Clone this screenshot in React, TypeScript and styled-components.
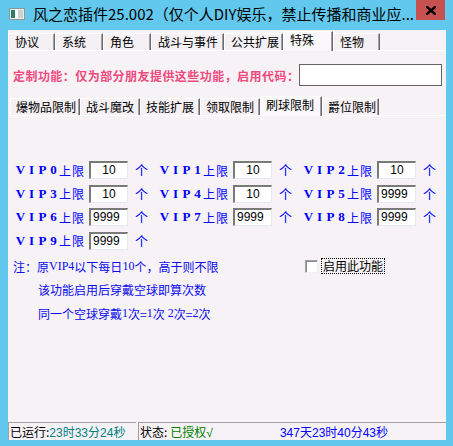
import React from "react";
import styled, { createGlobalStyle } from "styled-components";

const Global = createGlobalStyle`
  html, body { margin: 0; padding: 0; background: #62c8ee; }
  body { font-family: "Noto Sans CJK SC", "Liberation Sans", sans-serif; }
  * { box-sizing: border-box; }
`;

const Window = styled.div`
  width: 453px;
  height: 446px;
  background: #62c8ee;
  display: flex;
  flex-direction: column;
`;

const TitleBar = styled.div`
  height: 30px;
  display: flex;
  align-items: flex-start;
`;

const TitleIcon = styled.svg`
  margin: 8px 0 0 9px;
  flex: none;
`;

const TitleText = styled.div`
  margin: 4px 0 0 8px;
  font-family: "Noto Sans CJK SC", sans-serif;
  font-size: 15px;
  line-height: 20px;
  color: #000;
  white-space: nowrap;
  flex: 1;
  overflow: hidden;
`;

const CloseButton = styled.div`
  width: 29px;
  height: 20px;
  margin-right: 8px;
  background: #c75050;
  display: flex;
  align-items: center;
  justify-content: center;
  flex: none;
`;

const Client = styled.div`
  margin: 0 7px 6px 8px;
  flex: 1;
  background: #f6f2f6;
  display: flex;
  flex-direction: column;
`;

const TabRow = styled.div<{ $left?: number }>`
  height: 20px;
  display: flex;
  align-items: flex-end;
  padding-left: ${(p) => p.$left ?? 0}px;
`;

const Tab = styled.div<{ $w: number; $active?: boolean; $pad?: number }>`
  width: ${(p) => p.$w}px;
  height: ${(p) => (p.$active ? 20 : 17)}px;
  margin-bottom: ${(p) => (p.$active ? -1 : 0)}px;
  position: relative;
  z-index: ${(p) => (p.$active ? 2 : 1)};
  background: ${(p) => (p.$active ? "#faf8fa" : "#f4f0f4")};
  border-top: 1px solid #ffffff;
  border-left: 1px solid #ffffff;
  border-right: 1px solid #696969;
  box-shadow: inset -1px 0 0 #a0a0a0;
  padding-left: ${(p) => p.$pad ?? 6}px;
  font-size: 12px;
  line-height: ${(p) => (p.$active ? 16 : 15)}px;
  color: #000;
  white-space: nowrap;
`;

const Panel = styled.div`
  flex: 1;
  border-top: 1px solid #ffffff;
  display: flex;
  flex-direction: column;
`;

const CodeRow = styled.div`
  margin-top: 13px;
  height: 22px;
  display: flex;
  align-items: center;
  padding: 0 4px 0 5px;
`;

const CodeLabel = styled.div`
  font-size: 12px;
  font-weight: bold;
  letter-spacing: 0.45px;
  color: #f04a7c;
  white-space: nowrap;
`;

const CodeInput = styled.div`
  margin-left: auto;
  width: 144px;
  height: 22px;
  background: #fff;
  border: 1px solid #646464;
`;

const SubTabs = styled.div`
  margin-top: 9px;
`;

const InnerPanel = styled.div`
  flex: 1;
  border-top: 1px solid #ffffff;
  padding: 45px 0 0 7px;
`;

const VipGrid = styled.div`
  display: grid;
  grid-template-columns: repeat(3, 144px);
  grid-auto-rows: 23.6px;
`;

const VipCell = styled.div`
  display: flex;
  align-items: flex-start;
  height: 23.6px;
`;

const VipLabel = styled.div`
  width: 74px;
  display: flex;
  align-items: center;
  height: 18px;
  color: #0000ff;
  font-size: 12px;
`;

const Glyph = styled.span`
  width: 11px;
  text-align: center;
  font-family: "Liberation Serif", serif;
  font-weight: bold;
  font-size: 13px;
`;

const LimitText = styled.span`
  font-size: 12px;
  letter-spacing: 1px;
`;

const NumBox = styled.div<{ $center?: boolean }>`
  width: 39px;
  height: 18px;
  background: #fff;
  border-style: solid;
  border-width: 2px 1px 1px 2px;
  border-color: #7a7a7a #e8e8e8 #e8e8e8 #7a7a7a;
  font-family: "Liberation Sans", sans-serif;
  font-size: 12px;
  line-height: 14px;
  color: #000;
  text-align: ${(p) => (p.$center ? "center" : "left")};
  padding-left: ${(p) => (p.$center ? 0 : 2)}px;
`;

const Unit = styled.span`
  margin-left: 7px;
  color: #0000ff;
  font-size: 13px;
  line-height: 18px;
`;

const Notes = styled.div`
  margin-top: -1px;
  margin-left: -2px;
  display: flex;
  flex-direction: column;
`;

const NoteLine = styled.div<{ $indent?: number }>`
  height: 23.5px;
  display: flex;
  align-items: center;
  padding-left: ${(p) => p.$indent ?? 0}px;
  font-size: 12px;
  color: #0a0aee;
  white-space: nowrap;
`;

const Serif = styled.span`
  font-family: "Liberation Serif", serif;
  font-size: 12px;
`;

const CheckWrap = styled.div`
  margin-left: auto;
  margin-right: 62px;
  display: flex;
  align-items: center;
  color: #000;
`;

const CheckBox = styled.div`
  width: 13px;
  height: 13px;
  background: #fff;
  border-style: solid;
  border-width: 1px;
  border-color: #a0a0a0 #f0f0f0 #f0f0f0 #a0a0a0;
  box-shadow: inset 1px 1px 0 #8a8a8a;
`;

const CheckLabel = styled.span`
  margin-left: 4px;
  padding: 0 1px;
  outline: 1px dotted #000;
  line-height: 14px;
  font-size: 12px;
  color: #000;
`;

const StatusBar = styled.div`
  height: 18px;
  display: flex;
  gap: 2px;
`;

const StatusPanel = styled.div<{ $w?: number }>`
  ${(p) => (p.$w ? `width: ${p.$w}px;` : "flex: 1;")}
  border-top: 1px solid #a0a0a0;
  border-left: 1px solid #a0a0a0;
  display: flex;
  align-items: center;
  padding-left: 1px;
  font-size: 12px;
  white-space: nowrap;
`;

const Colored = styled.span<{ $c: string; $ml?: number }>`
  color: ${(p) => p.$c};
  margin-left: ${(p) => p.$ml ?? 0}px;
  font-family: "Liberation Sans", "Noto Sans CJK SC", sans-serif;
`;

const topTabs: [string, number][] = [
  ["协议", 47],
  ["系统", 48],
  ["角色", 48],
  ["战斗与事件", 73],
  ["公共扩展", 59],
  ["特殊", 50],
  ["怪物", 47],
];

const subTabs: [string, number][] = [
  ["爆物品限制", 70],
  ["战斗魔改", 60],
  ["技能扩展", 60],
  ["领取限制", 60],
  ["刷球限制", 62],
  ["爵位限制", 57],
];

const vips = ["10", "10", "10", "10", "10", "9999", "9999", "9999", "9999", "9999"];

export default function App() {
  return (
    <Window>
      <Global />
      <TitleBar>
        <TitleIcon width="16" height="12" viewBox="0 0 16 12">
          <rect x="0.5" y="0.5" width="15" height="11" fill="#e8ecec" stroke="#8a9a9a" />
          <rect x="2" y="2" width="4" height="8" fill="#2f7a6a" />
          <rect x="6" y="2" width="3" height="8" fill="#ffffff" />
          <rect x="9" y="2" width="5" height="8" fill="#c8d0d0" />
        </TitleIcon>
        <TitleText>风之恋插件25.002（仅个人DIY娱乐，禁止传播和商业应...</TitleText>
        <CloseButton>
          <svg width="10" height="9" viewBox="0 0 10 9">
            <path d="M1 1 L9 8 M9 1 L1 8" stroke="#000" strokeWidth="2.4" strokeLinecap="square" />
          </svg>
        </CloseButton>
      </TitleBar>
      <Client>
        <TabRow>
          {topTabs.map(([t, w]) => (
            <Tab key={t} $w={w} $active={t === "特殊"}>
              {t}
            </Tab>
          ))}
        </TabRow>
        <Panel>
          <CodeRow>
            <CodeLabel>定制功能：仅为部分朋友提供这些功能，启用代码：</CodeLabel>
            <CodeInput />
          </CodeRow>
          <SubTabs>
            <TabRow $left={2}>
              {subTabs.map(([t, w]) => (
                <Tab key={t} $w={w} $pad={5} $active={t === "刷球限制"}>
                  {t}
                </Tab>
              ))}
            </TabRow>
          </SubTabs>
          <InnerPanel>
            <VipGrid>
              {vips.map((v, i) => (
                <VipCell key={i}>
                  <VipLabel>
                    <Glyph>V</Glyph>
                    <Glyph>I</Glyph>
                    <Glyph>P</Glyph>
                    <Glyph>{i}</Glyph>
                    <LimitText>上限</LimitText>
                  </VipLabel>
                  <NumBox $center={v.length < 4}>{v}</NumBox>
                  <Unit>个</Unit>
                </VipCell>
              ))}
            </VipGrid>
            <Notes>
              <NoteLine>
                注：原<Serif>VIP4</Serif>以下每日<Serif>10</Serif>个，高于则不限
                <CheckWrap>
                  <CheckBox />
                  <CheckLabel>启用此功能</CheckLabel>
                </CheckWrap>
              </NoteLine>
              <NoteLine $indent={25}>该功能启用后穿戴空球即算次数</NoteLine>
              <NoteLine $indent={25}>
                同一个空球穿戴<Serif>1</Serif>次=<Serif>1</Serif>次 <Serif>&nbsp;2</Serif>次=<Serif>2</Serif>次
              </NoteLine>
            </Notes>
          </InnerPanel>
        </Panel>
        <StatusBar>
          <StatusPanel $w={128}>
            已运行:<Colored $c="#008080">23时33分24秒</Colored>
          </StatusPanel>
          <StatusPanel>
            状态:<Colored $c="#008000" $ml={3}>已授权√</Colored>
            <Colored $c="#0000ff" $ml={67}>347天23时40分43秒</Colored>
          </StatusPanel>
        </StatusBar>
      </Client>
    </Window>
  );
}
